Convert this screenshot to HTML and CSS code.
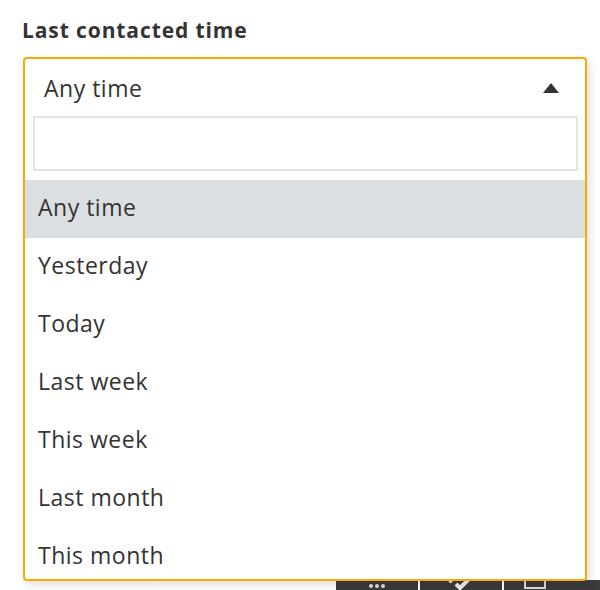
FILE: index.html
```html
<!DOCTYPE html>
<html lang="en">
<head>
  <meta charset="UTF-8" />
  <title>Last contacted time</title>
  <link rel="stylesheet" href="styles.css">
</head>
<body>

  <!-- Filter label -->
  <h2 class="field-label">Last contacted time</h2>

  <!-- Open select with search -->
  <div class="select-open">
    <div class="select-head">
      <span>Any time</span>
      <span class="caret"></span>
    </div>
    <div class="search-box">
      <input type="text" aria-label="Search">
    </div>
    <ul class="options">
      <li class="active">Any time</li>
      <li>Yesterday</li>
      <li>Today</li>
      <li>Last week</li>
      <li>This week</li>
      <li>Last month</li>
      <li>This month</li>
    </ul>
  </div>

  <!-- Toolbar underneath the dropdown -->
  <div class="toolbar">
    <div class="tool"><span class="dot"></span><span class="dot"></span><span class="dot"></span></div>
    <div class="tool">
      <svg width="30" height="16" viewBox="0 0 30 16"><path d="M2 2 L6 6 M10 8 L14 12 L26 0" stroke="#eee" stroke-width="4" fill="none"/></svg>
    </div>
    <div class="tool"><span class="frame"></span></div>
  </div>

</body>
</html>
```

FILE: styles.css
```css
/* Base styling */
body {
  margin: 0;
  padding: 17px 0 0 22px;
  font-family: "Open Sans", Lato, sans-serif;
  color: #333;
  background: #fff;
  height: 590px;
  box-sizing: border-box;
  position: relative;
  overflow: hidden;
}
.field-label {
  margin: 0 0 14px;
  font-size: 21px;
  font-weight: 700;
  letter-spacing: 0.9px;
  line-height: 26px;
  color: #333;
}
/* Dropdown panel */
.select-open {
  position: relative;
  z-index: 2;
  margin-left: 1px;
  width: 564px;
  height: 524px;
  box-sizing: border-box;
  border: 2px solid #fdaa00;
  border-radius: 4px;
  background: #fff;
  box-shadow: 3px 4px 10px rgba(0, 0, 0, 0.12);
  overflow: hidden;
}
.select-head {
  height: 57px;
  display: flex;
  align-items: center;
  justify-content: space-between;
  padding: 1px 26px 0 19px;
  box-sizing: border-box;
  font-size: 23px;
  letter-spacing: 0.5px;
}
.caret {
  width: 0;
  height: 0;
  border-left: 8px solid transparent;
  border-right: 8px solid transparent;
  border-bottom: 10px solid #333;
}
.search-box {
  padding: 0 7px 0 8px;
}
.search-box input {
  display: block;
  width: 100%;
  height: 55px;
  box-sizing: border-box;
  border: 2px solid #e4e4e4;
  font-size: 20px;
  outline: none;
}
.options {
  list-style: none;
  margin: 9px 0 0;
  padding: 0;
}
.options li {
  height: 58px;
  line-height: 55px;
  padding-left: 13px;
  font-size: 23px;
  letter-spacing: 0.5px;
  color: #333;
}
.options li.active {
  background: #dcdfe2;
}
/* Toolbar hidden behind the dropdown */
.toolbar {
  position: absolute;
  left: 336px;
  bottom: -20px;
  display: flex;
  gap: 2px;
  height: 30px;
  z-index: 1;
}
.tool {
  width: 82px;
  background: #3a3b3d;
  display: flex;
  justify-content: center;
  align-items: flex-start;
  gap: 2px;
  padding-top: 4px;
  box-sizing: border-box;
}
.tool:last-child {
  width: 100px;
}
.dot {
  width: 4px;
  height: 4px;
  border-radius: 50%;
  background: #ddd;
}
.tool svg {
  margin-top: -8px;
}
.frame {
  width: 18px;
  height: 6px;
  margin-top: -3px;
  border: 2px solid #ddd;
  border-top: none;
  margin-right: 38px;
}
```
